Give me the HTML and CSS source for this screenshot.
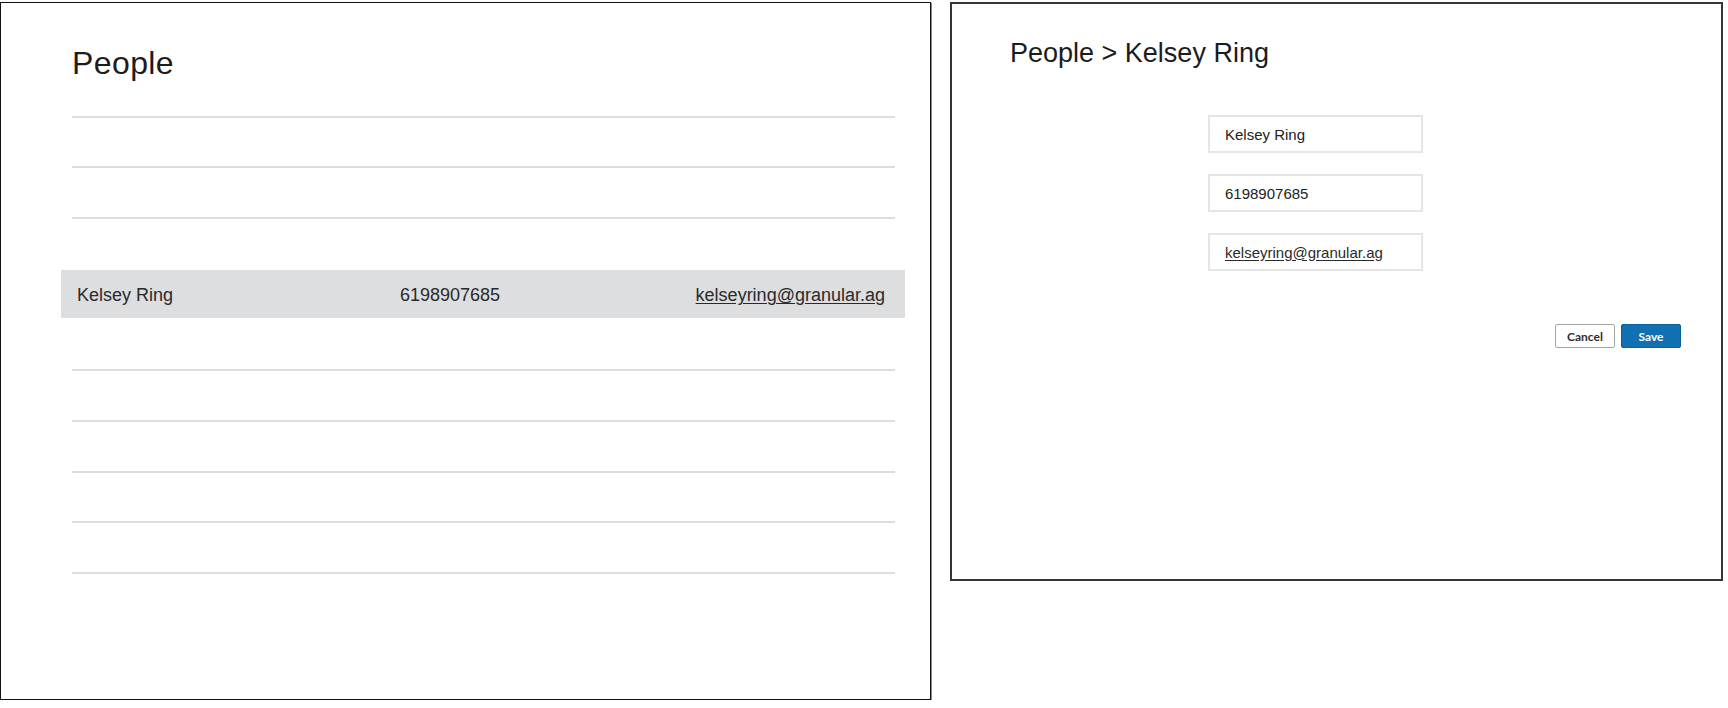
FILE: index.html
```html
<!DOCTYPE html>
<html lang="en">
<head>
<meta charset="utf-8">
<title>People</title>
<link rel="stylesheet" href="styles.css">
</head>
<body>
<div class="canvas">
  <section class="panel panel-list">
    <h1 class="title">People</h1>
    <div class="rows">
      <div class="row"></div>
      <div class="row"></div>
      <div class="row"></div>
      <div class="row selected">
        <span class="cell">Kelsey Ring</span>
        <span class="cell">6198907685</span>
        <a class="cell email">kelseyring@granular.ag</a>
      </div>
      <div class="row"></div>
      <div class="row"></div>
      <div class="row"></div>
      <div class="row"></div>
      <div class="row"></div>
    </div>
  </section>
  <section class="panel panel-detail">
    <h2 class="crumbs">People &gt; Kelsey Ring</h2>
    <div class="form">
      <div class="field">Kelsey Ring</div>
      <div class="field">6198907685</div>
      <div class="field"><span class="email">kelseyring@granular.ag</span></div>
    </div>
    <div class="actions">
      <button class="btn btn-cancel">Cancel</button>
      <button class="btn btn-save">Save</button>
    </div>
  </section>
</div>
</body>
</html>
```
FILE: styles.css
```css
* { box-sizing: border-box; }
body {
  margin: 0;
  background: #fff;
  font-family: "Liberation Sans", Arial, sans-serif;
  color: #222;
}
.canvas {
  display: flex;
  align-items: flex-start;
  gap: 19px;
  padding-top: 2px;
}
.panel { background: #fff; }

/* left: list */
.panel-list {
  width: 931px;
  height: 698px;
  border: 1px solid #111;
  box-shadow: 1px 1px 0 #8a8a8a;
  padding: 44px 35px 0 71px;
}
.title {
  margin: 0;
  font-size: 32px;
  line-height: 32px;
  font-weight: normal;
  letter-spacing: 0.4px;
  color: #1c1c1c;
}
.rows {
  margin-top: 36.7px;
  border-top: 2px solid #dcdcdc;
}
.row {
  height: 50.7px;
  border-bottom: 2px solid #dcdcdc;
}
.row.selected {
  margin: -2px -10px 0 -11px;
  height: 52.7px;
  border-top: 2px solid #fff;
  border-bottom: 2px solid #fff;
  background: #dddee0;
  background-clip: padding-box;
  display: grid;
  grid-template-columns: 323px 1fr auto;
  align-items: center;
  padding: 3px 20px 0 16px;
  font-size: 18px;
  color: #2a2a2a;
}
.email {
  text-decoration: underline;
  text-underline-offset: 2px;
  color: #2a2a2a;
}

/* right: detail */
.panel-detail {
  width: 773px;
  height: 579px;
  border: 2px solid #363636;
  padding: 36px 40px 0 58px;
}
.crumbs {
  margin: 0;
  font-size: 27px;
  line-height: 27px;
  font-weight: normal;
  color: #1c1c1c;
}
.form {
  margin: 48px 0 0 198px;
  display: flex;
  flex-direction: column;
  gap: 21px;
  width: 215px;
}
.field {
  height: 38px;
  border: 2px solid #e5e5e5;
  padding: 0 15px;
  display: flex;
  align-items: center;
  font-size: 15px;
  color: #222;
}
.actions {
  margin-top: 53px;
  display: flex;
  justify-content: flex-end;
  gap: 6px;
}
.btn {
  width: 60px;
  height: 24px;
  border-radius: 2px;
  font-family: Lato, "Liberation Sans", sans-serif;
  font-weight: bold;
  font-size: 12px;
  padding: 0;
  cursor: pointer;
}
.btn-cancel {
  background: #fff;
  border: 1px solid #a6a6a6;
  color: #2f2f2f;
}
.btn-save {
  background: #1170b2;
  border: 1px solid #0d5f99;
  color: #fff;
}
```
